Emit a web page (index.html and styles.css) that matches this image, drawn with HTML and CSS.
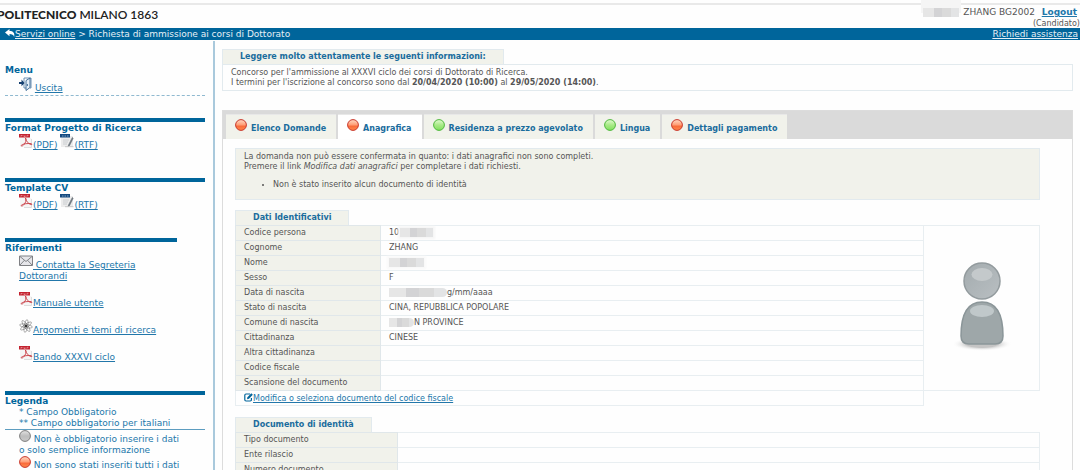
FILE: index.html
```html
<!DOCTYPE html>
<html lang="it">
<head>
  <meta charset="UTF-8">
  <meta name="viewport" content="width=device-width, initial-scale=1.0">
  <title>Richiesta di ammissione ai corsi di Dottorato</title>
  <link rel="stylesheet" href="styles.css">
</head>
<body>

<!-- shared icons -->
<svg class="defs" width="0" height="0" aria-hidden="true">
  <defs>
    <linearGradient id="gRed" x1="0" y1="0" x2="0" y2="1">
      <stop offset="0" stop-color="#ffd9c4"/><stop offset="0.5" stop-color="#ff9c74"/><stop offset="0.6" stop-color="#f96a3a"/><stop offset="1" stop-color="#ff8a4c"/>
    </linearGradient>
    <linearGradient id="gGreen" x1="0" y1="0" x2="0" y2="1">
      <stop offset="0" stop-color="#e2fbd2"/><stop offset="0.5" stop-color="#a9ea88"/><stop offset="1" stop-color="#7fe05c"/>
    </linearGradient>
    <linearGradient id="gGray" x1="0" y1="0" x2="0" y2="1">
      <stop offset="0" stop-color="#e4e4e4"/><stop offset="0.5" stop-color="#bdbdbd"/><stop offset="1" stop-color="#c9c9c9"/>
    </linearGradient>
    <linearGradient id="gHead" x1="0" y1="0" x2="1" y2="1">
      <stop offset="0" stop-color="#a3abae"/><stop offset="1" stop-color="#b9bfc2"/>
    </linearGradient>
    <radialGradient id="gShadow">
      <stop offset="0.5" stop-color="#c4c4c4"/><stop offset="1" stop-color="#fff" stop-opacity="0"/>
    </radialGradient>
    <symbol id="red" viewBox="0 0 12 12"><circle cx="6" cy="6" r="5.4" fill="url(#gRed)" stroke="#c8372b"/></symbol>
    <symbol id="green" viewBox="0 0 12 12"><circle cx="6" cy="6" r="5.4" fill="url(#gGreen)" stroke="#4fb83c"/></symbol>
    <symbol id="gray" viewBox="0 0 12 12"><circle cx="6" cy="6" r="5.4" fill="url(#gGray)" stroke="#7d7d7d"/></symbol>
    <symbol id="pdf" viewBox="0 0 14 14">
      <path d="M1 3h9l3 2v8H1z" fill="#f5f5f5"/>
      <path d="M12.500 5v8.500H5" fill="none" stroke="#dedede"/>
      <path d="M0 0h11v3.500H0z" fill="#c3222f"/>
      <path d="M2 1.200v1.500M2 1.500h1.500M5 1.200v1.300h1.200V1.500M8 2.700V1.300h1.500" fill="none" stroke="#eda5a8" stroke-width="0.700"/>
      <path d="M6.500 4c.8 2.500.3 4.500-1.500 6.500-1 1.300-2.500 2-2.800 1.300C2 10.500 6 9.200 12 9.600c1.300.3 1.200 1.200 0 .9C9.500 9.800 7.500 8 6.500 4z" fill="none" stroke="#c83a42" stroke-width="0.900"/>
    </symbol>
    <symbol id="rtf" viewBox="0 0 14 14">
      <path d="M1 2h12v11H1z" fill="#ececec"/>
      <path d="M3 6h6M3 8h5M3 10h4" stroke="#c4c8cc" stroke-width="0.800"/>
      <path d="M0 0h10v3.500H0z" fill="#154a80"/>
      <path d="M2 2h1.500M4.500 2H6M7 2h1.500" stroke="#8ba9c6" stroke-width="0.900"/>
      <path d="M12.300 3.500L8.600 10.800l-.6 2 1.600-1.300 3.600-7.200z" fill="#77818a" stroke="#596067" stroke-width="0.500"/>
      <path d="M5 12.700h8.500" stroke="#c8c8c8"/>
    </symbol>
    <symbol id="mail" viewBox="0 0 14 11">
      <path d="M.5.5h13v9.500H.5z" fill="#e6e6ea" stroke="#7f8084"/>
      <path d="M1 1l6 5 6-5M1 9.500l4.500-4.800M13 9.500L8.500 4.700" fill="none" stroke="#77797e" stroke-width="0.900"/>
    </symbol>
    <symbol id="atom" viewBox="0 0 14 14">
      <g fill="none" stroke="#666" stroke-width="0.500">
        <ellipse cx="7" cy="7" rx="6.500" ry="1.800" transform="rotate(10 7 7)"/>
        <ellipse cx="7" cy="7" rx="6.500" ry="1.800" transform="rotate(55 7 7)"/>
        <ellipse cx="7" cy="7" rx="6.500" ry="1.800" transform="rotate(100 7 7)"/>
        <ellipse cx="7" cy="7" rx="6.500" ry="1.800" transform="rotate(145 7 7)"/>
      </g>
      <circle cx="7" cy="7" r="1.300" fill="#333"/>
    </symbol>
  </defs>
</svg>

<header class="header">
  <div class="logo"><b>POLITECNICO</b> MILANO 1863</div>
  <div class="user">
    <div class="user-name">
      <span class="mask mask-user"></span>ZHANG BG2002 <a class="logout" href="#">Logout</a>
    </div>
    <div class="role">(Candidato)</div>
  </div>
</header>

<nav class="topbar">
  <div>
    <svg class="back" viewBox="0 0 10 8"><path d="M0 3.500L4.500 0v2C8 2 10 3.800 9.200 8 8.500 5.800 7 5 4.500 5v2.200z" fill="#fff"/></svg><a href="#">Servizi online</a> &gt; Richiesta di ammissione ai corsi di Dottorato
  </div>
  <a href="#">Richiedi assistenza</a>
</nav>

<div class="page">
  <aside class="sidebar">
    <section class="side-block side-menu">
      <h2>Menu</h2>
      <div class="side-body">
        <a class="plain" href="#"><svg class="icon-exit" viewBox="0 0 13 15">
          <path d="M5 2h7v10h-1M5 2v10h2" fill="#fff" stroke="#5b86ad" stroke-width="0.900"/>
          <path d="M7 4.500l4-2.500v9.500L7 14.500z" fill="#e4eef7" stroke="#34628f" stroke-width="0.900"/>
          <path d="M8.300 8v2" stroke="#34628f"/>
          <path d="M0 6h2.500V3.500L5.500 7l-3 3.300V8H0z" fill="#143f70"/>
        </svg> <span class="underlined">Uscita</span></a>
      </div>
    </section>

    <section class="side-block side-files">
      <h2>Format Progetto di Ricerca</h2>
      <div class="side-body">
        <a href="#"><svg class="icon"><use href="#pdf"/></svg>(PDF)</a>
        <a href="#"><svg class="icon"><use href="#rtf"/></svg>(RTF)</a>
      </div>
    </section>

    <section class="side-block side-files">
      <h2>Template CV</h2>
      <div class="side-body">
        <a href="#"><svg class="icon"><use href="#pdf"/></svg>(PDF)</a>
        <a href="#"><svg class="icon"><use href="#rtf"/></svg>(RTF)</a>
      </div>
    </section>

    <section class="side-block side-refs">
      <h2>Riferimenti</h2>
      <ul class="side-body">
        <li><a href="#"><svg class="icon"><use href="#mail"/></svg> Contatta la Segreteria Dottorandi</a></li>
        <li><a href="#"><svg class="icon"><use href="#pdf"/></svg>Manuale utente</a></li>
        <li><a href="#"><svg class="icon"><use href="#atom"/></svg>Argomenti e temi di ricerca</a></li>
        <li><a href="#"><svg class="icon"><use href="#pdf"/></svg>Bando XXXVI ciclo</a></li>
      </ul>
    </section>

    <section class="side-block side-legend">
      <h2>Legenda</h2>
      <p>* Campo Obbligatorio<br>** Campo obbligatorio per italiani</p>
      <ul class="side-body">
        <li><svg class="dot"><use href="#gray"/></svg> Non è obbligatorio inserire i dati o solo semplice informazione</li>
        <li><svg class="dot"><use href="#red"/></svg> Non sono stati inseriti tutti i dati</li>
      </ul>
    </section>
  </aside>

  <main class="main">
    <section class="notice">
      <h3 class="caption">Leggere molto attentamente le seguenti informazioni:</h3>
      <p>Concorso per l'ammissione al XXXVI ciclo dei corsi di Dottorato di Ricerca.<br>
      I termini per l'iscrizione al concorso sono dal <b>20/04/2020 (10:00)</b> al <b>29/05/2020 (14:00)</b>.</p>
    </section>

    <section class="tabs-box">
      <nav class="tabs">
        <a href="#"><svg class="dot"><use href="#red"/></svg>Elenco Domande</a>
        <a href="#" class="active"><svg class="dot"><use href="#red"/></svg>Anagrafica</a>
        <a href="#"><svg class="dot"><use href="#green"/></svg>Residenza a prezzo agevolato</a>
        <a href="#"><svg class="dot"><use href="#green"/></svg>Lingua</a>
        <a href="#"><svg class="dot"><use href="#red"/></svg>Dettagli pagamento</a>
      </nav>

      <div class="tab-content">
        <div class="alert">
          <p>La domanda non può essere confermata in quanto: i dati anagrafici non sono completi.<br>
          Premere il link <i>Modifica dati anagrafici</i> per completare i dati richiesti.</p>
          <ul>
            <li>Non è stato inserito alcun documento di identità</li>
          </ul>
        </div>

        <h3 class="caption">Dati Identificativi</h3>
        <table class="data person">
          <colgroup><col class="col-label"><col><col class="col-photo"></colgroup>
          <tr>
            <th scope="row">Codice persona</th>
            <td>10<span class="mask mask-code"></span></td>
            <td class="photo" rowspan="11">
              <svg class="avatar" viewBox="0 0 60 90" role="img" aria-label="Foto">
                <ellipse cx="30" cy="82" rx="30" ry="7" fill="url(#gShadow)"/>
                <circle cx="30" cy="19" r="18" fill="url(#gHead)" stroke="#939b9e" stroke-width="1.500"/>
                <ellipse cx="30" cy="12.500" rx="10.500" ry="6.500" fill="#c4c9cb"/>
                <path d="M30 40C14 40 9 54 9 74q0 8 8 8h26q8 0 8-8C51 54 46 40 30 40z" fill="#9ea7a9" stroke="#8b9699" stroke-width="1.500"/>
                <ellipse cx="30" cy="49" rx="12" ry="6" fill="#c0c8ca"/>
              </svg>
            </td>
          </tr>
          <tr><th scope="row">Cognome</th><td>ZHANG</td></tr>
          <tr><th scope="row">Nome</th><td><span class="mask mask-name"></span></td></tr>
          <tr><th scope="row">Sesso</th><td>F</td></tr>
          <tr><th scope="row">Data di nascita</th><td><span class="mask mask-date"></span>g/mm/aaaa</td></tr>
          <tr><th scope="row">Stato di nascita</th><td>CINA, REPUBBLICA POPOLARE</td></tr>
          <tr><th scope="row">Comune di nascita</th><td><span class="mask mask-city"></span>N PROVINCE</td></tr>
          <tr><th scope="row">Cittadinanza</th><td>CINESE</td></tr>
          <tr><th scope="row">Altra cittadinanza</th><td></td></tr>
          <tr><th scope="row">Codice fiscale</th><td></td></tr>
          <tr><th scope="row">Scansione del documento</th><td></td></tr>
          <tr>
            <td class="edit" colspan="2"><a href="#"><svg class="icon-edit" viewBox="0 0 9 9"><path d="M6 1H2Q.8 1 .8 2.200v4.600Q.8 8 2 8h4.200q1.200 0 1.200-1.200V5" fill="none" stroke="#00659b" stroke-width="1.200"/><path d="M3 6.200l.4-2L7.300.3l1.500 1.500L5 5.700z" fill="#00659b"/></svg>Modifica o seleziona documento del codice fiscale</a></td>
            <td class="blank"></td>
          </tr>
        </table>

        <h3 class="caption">Documento di identità</h3>
        <table class="data document">
          <colgroup><col class="col-label"><col></colgroup>
          <tr><th scope="row">Tipo documento</th><td></td></tr>
          <tr><th scope="row">Ente rilascio</th><td></td></tr>
          <tr><th scope="row">Numero documento</th><td></td></tr>
        </table>
      </div>
    </section>
  </main>
</div>

</body>
</html>
```

FILE: styles.css
```css
* {
  box-sizing: border-box;
}

html {
  overflow-x: hidden;
  scrollbar-width: none;
}

body {
  margin: 0;
  background: #fefefe;
  color: #555;
  font-family: Verdana, "DejaVu Sans", sans-serif;
  font-size: 8px;
  line-height: 10px;
}

h2, h3, p, ul {
  margin: 0;
  padding: 0;
}

a {
  color: #2277aa;
}

.defs {
  position: absolute;
}

/* header */
.header {
  display: flex;
  justify-content: space-between;
  height: 25px;
  margin-top: 3px;
  border-top: 2px solid #e9e9e9;
}

.logo {
  margin-left: -3px;
  padding-top: 3px;
  color: #222;
  font-family: Lato, sans-serif;
  font-size: 12px;
  font-weight: 600;
  line-height: 14px;
}

.logo b {
  font-weight: 900;
}

.user {
  text-align: right;
}

.user-name {
  padding: 1px 3px 0 0;
  font-size: 9px;
  line-height: 12px;
}

.logout {
  margin-left: 4px;
  font-weight: bold;
}

.role {
  line-height: 11px;
}

.topbar {
  display: flex;
  justify-content: space-between;
  padding: 0 2px 0 5px;
  background: #00659b;
  color: #e6f0f6;
  font-size: 9px;
  line-height: 12px;
}

.topbar a {
  color: #e6f0f6;
}

.back {
  width: 10px;
  height: 8px;
}

/* columns */
.page {
  display: flex;
  padding-top: 1px;
}

.sidebar {
  flex: 0 0 215px;
  padding: 23px 8px 0 5px;
  border-right: 2px solid #a9c9dc;
  color: #2277aa;
  font-size: 9px;
  line-height: 11px;
}

.sidebar h2 {
  color: #00659b;
  font-size: 9px;
  line-height: 12px;
}

.side-block {
  width: 200px;
}

.side-body {
  padding-left: 14px;
  list-style: none;
}

.side-menu {
  height: 32px;
  margin-bottom: 22px;
  border-bottom: 1px dashed #8fb9d0;
}

.plain {
  text-decoration: none;
}

.underlined {
  text-decoration: underline;
}

.icon-exit {
  width: 13px;
  height: 15px;
}

.icon {
  width: 14px;
  height: 14px;
}

.dot {
  width: 12px;
  height: 12px;
}

.side-files {
  height: 60px;
  border-top: 4px solid #00659b;
}

.side-refs {
  width: 172px;
  margin-bottom: 28px;
  border-top: 4px solid #00659b;
}

.side-refs li {
  margin-bottom: 10px;
}

.side-legend {
  border-top: 4px solid #00659b;
}

.side-legend p {
  padding-left: 14px;
  border-bottom: 1px solid #5d9dc0;
}

.side-legend .side-body {
  padding-right: 20px;
}

.main {
  flex: 1;
  min-width: 0;
  padding: 8px 7px 0;
}

.caption {
  width: fit-content;
  padding: 0 17px;
  border: 1px solid #e2eaee;
  border-bottom: 0;
  background: #f1f2eb;
  color: #1a6c9d;
  font-size: 8px;
  line-height: 14px;
}

.notice p {
  padding: 3px 8px 2px;
  border: 1px solid #e2eaee;
}

.tabs-box {
  margin-top: 19px;
  border: 1px solid #dcdcdc;
  border-bottom: 0;
}

.tabs {
  display: flex;
  gap: 2px;
  padding: 3px 3px 0;
  background: #dadada;
}

.tabs a {
  padding: 4px 10px 2px 9px;
  border-top: 1px solid #e8e8e8;
  background: #f1f2eb;
  color: #1a6c9d;
  font-weight: bold;
  line-height: 16px;
  text-decoration: none;
}

.tabs .active {
  background: #fff;
}

.tabs .dot {
  margin-right: 4px;
}

.tab-content {
  padding: 9px 32px 0 12px;
}

.alert {
  margin-bottom: 10px;
  padding: 3px 8px 9px;
  border: 1px solid #e2eaee;
  background: #f1f2eb;
}

.alert ul {
  margin-top: 8px;
  padding-left: 29px;
}

/* data tables */
.data {
  width: 100%;
  border-collapse: collapse;
  table-layout: fixed;
}

.data th,
.data td {
  height: 15px;
  padding: 0 8px;
  border: 1px solid #e8eef1;
  font-weight: normal;
  line-height: 10px;
  text-align: left;
}

.data th {
  border-color: #e0e7ea;
  background: #f1f2eb;
}

.person {
  margin-bottom: 11px;
}

.person .col-label {
  width: 145px;
}

.person .col-photo {
  width: 116px;
}

.document .col-label {
  width: 162px;
}

.data .photo {
  text-align: center;
}

.data .blank {
  border: 0;
}

.avatar {
  width: 60px;
  height: 90px;
}

.icon-edit {
  width: 9px;
  height: 9px;
  vertical-align: -1px;
}

/* pixelated personal data */
.mask {
  display: inline-block;
  height: 9px;
  background: linear-gradient(90deg, #e6e6e6 30%, #d3d3d5 30% 52%, #dadada 52% 78%, #e3e4e5 78%);
  vertical-align: middle;
}

.mask-user {
  width: 36px;
  margin-right: 4px;
  box-shadow: 0 -6px 0 2px #f5f5f5;
}

.mask-code {
  width: 33px;
  margin-left: 1px;
  box-shadow: 0 0 2px 2px #f6f6f6;
}

.mask-name {
  width: 35px;
  box-shadow: 0 0 2px 2px #f9f9f9;
}

.mask-date {
  width: 58px;
  border-radius: 0 6px 6px 0;
}

.mask-city {
  width: 25px;
  border-radius: 0 8px 8px 0;
}
```
